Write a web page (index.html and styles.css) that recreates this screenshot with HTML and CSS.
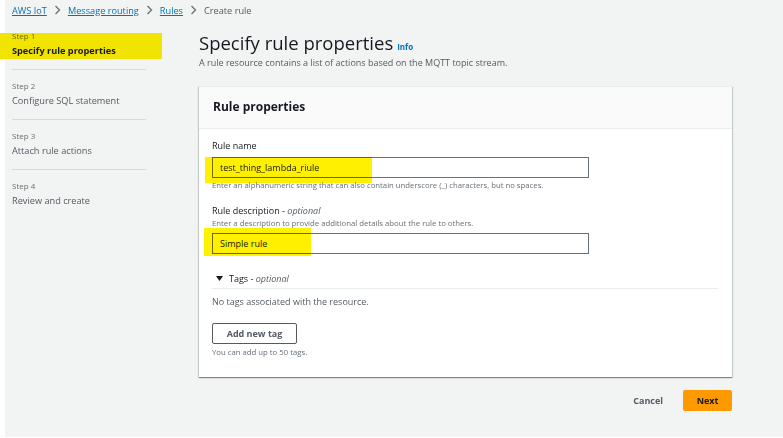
FILE: index.html
```html
<!DOCTYPE html>
<html lang="en">
<head>
<meta charset="utf-8">
<title>Create rule</title>
<link rel="stylesheet" href="styles.css">
</head>
<body>
<div class="frame">
<div class="page">
  <nav class="crumbs">
    <a class="crumb-link" href="#">AWS IoT</a>
    <svg class="chev" width="7" height="10" viewBox="0 0 7 10"><polyline points="1.5,1 5.5,5 1.5,9" fill="none" stroke="#687078" stroke-width="1.3"/></svg>
    <a class="crumb-link" href="#">Message routing</a>
    <svg class="chev" width="7" height="10" viewBox="0 0 7 10"><polyline points="1.5,1 5.5,5 1.5,9" fill="none" stroke="#687078" stroke-width="1.3"/></svg>
    <a class="crumb-link" href="#">Rules</a>
    <svg class="chev" width="7" height="10" viewBox="0 0 7 10"><polyline points="1.5,1 5.5,5 1.5,9" fill="none" stroke="#687078" stroke-width="1.3"/></svg>
    <span class="crumb-current">Create rule</span>
  </nav>
  <div class="main">
    <ul class="steps">
      <li class="step current">
        <span class="hl-nav"></span>
        <div class="step-num">Step 1</div>
        <div class="step-title">Specify rule properties</div>
      </li>
      <li class="step">
        <div class="step-num">Step 2</div>
        <div class="step-title">Configure SQL statement</div>
      </li>
      <li class="step">
        <div class="step-num">Step 3</div>
        <div class="step-title">Attach rule actions</div>
      </li>
      <li class="step">
        <div class="step-num">Step 4</div>
        <div class="step-title">Review and create</div>
      </li>
    </ul>
    <div class="content">
      <h1 class="title"><span>Specify rule properties</span><a class="info" href="#">Info</a></h1>
      <p class="desc">A rule resource contains a list of actions based on the MQTT topic stream.</p>
      <section class="card">
        <header class="card-head">Rule properties</header>
        <div class="card-body">
          <div class="field">
            <div class="label">Rule name</div>
            <div class="input-wrap">
              <div class="input">test_thing_lambda_riule</div>
              <span class="hl hl-name"></span>
            </div>
            <div class="hint">Enter an alphanumeric string that can also contain underscore (_) characters, but no spaces.</div>
          </div>
          <div class="field field-2">
            <div class="label">Rule description - <i>optional</i></div>
            <div class="hint hint-top">Enter a description to provide additional details about the rule to others.</div>
            <div class="input-wrap">
              <div class="input">Simple rule</div>
              <span class="hl hl-desc"></span>
            </div>
          </div>
          <div class="tags-head">
            <svg class="caret" width="7" height="5" viewBox="0 0 7 5"><polygon points="0,0 7,0 3.5,5" fill="#16191f"/></svg>
            <span>Tags - <i>optional</i></span>
          </div>
          <div class="no-tags">No tags associated with the resource.</div>
          <button class="btn-normal">Add new tag</button>
          <div class="hint">You can add up to 50 tags.</div>
        </div>
      </section>
      <div class="actions">
        <button class="btn-link">Cancel</button>
        <button class="btn-primary">Next</button>
      </div>
    </div>
  </div>
</div>
</div>
</body>
</html>
```
FILE: styles.css
```css
* { box-sizing: border-box; }
html, body { margin: 0; padding: 0; background: #ffffff; }
body { font-family: "Open Sans", "Noto Sans", sans-serif; color: #16191f; }

.frame { background: #ffffff; padding-left: 5px; height: 438px; }

.page {
  height: 437px;
  background: #f2f3f3;
  padding-left: 7px;
}

.crumbs {
  height: 20px;
  display: flex;
  align-items: center;
  font-size: 9.2px;
}
.crumb-link { color: #0073bb; text-decoration: underline; text-underline-offset: 1px; }
.crumb-current { color: #545b64; }
.chev { margin: 0 7px 0 7px; }

.main { display: flex; }

.steps {
  list-style: none;
  margin: 0;
  padding: 0;
  width: 134px;
  flex: none;
}
.step {
  position: relative;
  padding: 10px 0;
  border-bottom: 1px solid #d5dbdb;
}
.step:last-child { border-bottom: none; }
.step-num { position: relative; font-size: 8px; line-height: 12px; color: #687078; margin-bottom: 1px; }
.step-title { position: relative; font-size: 9.2px; line-height: 16px; color: #545b64; }
.current .step-num { color: #6a6f00; }
.current .step-title { font-weight: 700; color: #16191f; }

.hl-nav {
  position: absolute;
  left: -12px;
  top: 13px;
  width: 162px;
  height: 26px;
  background: #f0e400;
}

.hl {
  position: absolute;
  background: #fff000;
  mix-blend-mode: multiply;
  pointer-events: none;
}

.content { margin-left: 53px; width: 533px; padding-top: 11px; }

.title {
  margin: 0;
  height: 24px;
  display: flex;
  align-items: baseline;
  font-size: 18.5px;
  line-height: 24px;
  font-weight: 400;
  color: #16191f;
}
.info { font-size: 8px; line-height: 10px; font-weight: 700; color: #0073bb; text-decoration: none; margin-left: 4px; }
.desc { margin: 2px 0 0; font-size: 9px; line-height: 12px; color: #545b64; }

.card {
  margin-top: 17px;
  background: #ffffff;
  border-top: 1px solid #eaeded;
  box-shadow: 0 1px 1px 0 rgba(0, 28, 36, 0.3), 1px 1px 1px 0 rgba(0, 28, 36, 0.15), -1px 1px 1px 0 rgba(0, 28, 36, 0.15);
}
.card-head {
  height: 42px;
  background: #fafafa;
  border-bottom: 1px solid #eaeded;
  padding-left: 14px;
  padding-bottom: 2px;
  display: flex;
  align-items: center;
  font-size: 12px;
  font-weight: 700;
}
.card-body { padding: 10px 14px 19px 13px; }

.label { font-size: 9px; line-height: 14px; color: #16191f; margin-bottom: 4px; }
.label i, .tags-head i { font-style: italic; color: #545b64; }
.input-wrap { position: relative; width: 377px; }
.input {
  height: 21px;
  border: 1px solid #687078;
  background: #ffffff;
  padding-left: 7px;
  display: flex;
  align-items: center;
  font-size: 9px;
  color: #16191f;
}
.hint { font-size: 7.75px; line-height: 11px; color: #687078; margin-top: 2px; }
.hint-top { margin-top: 0; margin-bottom: 4px; }
.field-2 { margin-top: 13px; }
.field-2 .label { margin-bottom: 0; }
.hl-name { left: -7px; top: 0; width: 167px; height: 26px; }
.hl-desc { left: -8px; top: -5px; width: 107px; height: 28px; }

.tags-head {
  margin-top: 17px;
  height: 18px;
  padding-bottom: 3px;
  border-bottom: 1px solid #eaeded;
  display: flex;
  align-items: center;
  gap: 6px;
  padding-left: 4px;
  font-size: 9px;
  color: #16191f;
}
.no-tags { margin-top: 6px; font-size: 9px; line-height: 14px; color: #545b64; }

.btn-normal {
  margin-top: 14px;
  display: block;
  width: 85px;
  height: 21px;
  border: 1px solid #545b64;
  border-radius: 2px;
  background: #ffffff;
  font-family: inherit;
  font-size: 9px;
  font-weight: 700;
  color: #545b64;
  padding: 0;
}
.btn-normal + .hint { margin-top: 2.5px; }

.actions {
  margin-top: 13px;
  display: flex;
  justify-content: flex-end;
  align-items: center;
  gap: 20px;
}
.btn-link {
  border: none;
  background: none;
  padding: 0;
  font-family: inherit;
  font-size: 9px;
  font-weight: 700;
  color: #545b64;
}
.btn-primary {
  width: 49px;
  height: 21px;
  border: none;
  border-radius: 2px;
  background: #ff9900;
  font-family: inherit;
  font-size: 9px;
  font-weight: 700;
  color: #16191f;
  padding: 0;
}
```
